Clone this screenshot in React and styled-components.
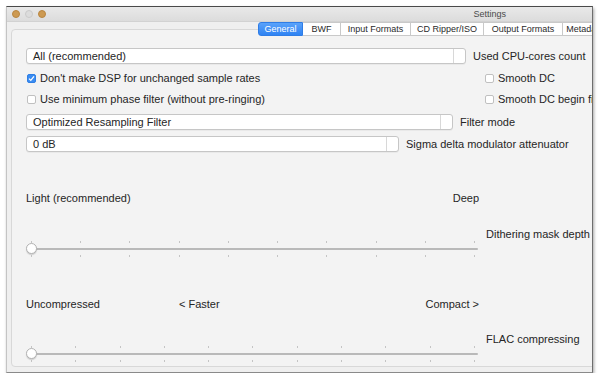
import React from "react";
import styled, { createGlobalStyle } from "styled-components";

const GlobalStyle = createGlobalStyle`
  body {
    margin: 0;
    background: #ffffff;
    font-family: "Liberation Sans", Arial, sans-serif;
  }
`;

const Window = styled.div`
  margin: 6px 0 0 6px;
  width: 587px;
  height: 367px;
  box-sizing: border-box;
  border: 1px solid #c4c4c4;
  border-top-color: #4a4a4a;
  border-right-color: #6e6e6e;
  border-bottom-color: #8a8a8a;
  background: #efefef;
  box-shadow: 1px 2px 3px rgba(0, 0, 0, 0.35);
  overflow: hidden;
  display: flex;
  flex-direction: column;
`;

const TitleBar = styled.div`
  height: 14px;
  flex: none;
  display: flex;
  align-items: center;
  padding-left: 5px;
  background: linear-gradient(#e9e9e9, #dcdcdc);
  border-bottom: 1px solid #d2d2d2;
`;

const Light = styled.span`
  width: 8px;
  height: 8px;
  border-radius: 50%;
  margin-right: 5px;
  box-sizing: border-box;
  background: ${(p) => (p.$off ? "#dcdcdc" : "#cd9a52")};
  border: 1px solid ${(p) => (p.$off ? "#cacaca" : "#b98640")};
`;

const Title = styled.span`
  margin-left: auto;
  margin-right: 86px;
  font-size: 9px;
  color: #4a4a4a;
`;

const TabBar = styled.div`
  position: relative;
  z-index: 1;
  display: flex;
  height: 14px;
  margin-left: 251px;
`;

const Tab = styled.div`
  flex: none;
  width: ${(p) => p.$w}px;
  box-sizing: border-box;
  display: flex;
  align-items: center;
  justify-content: center;
  font-size: 9px;
  white-space: nowrap;
  color: ${(p) => (p.$active ? "#ffffff" : "#2a2a2a")};
  background: ${(p) =>
    p.$active ? "linear-gradient(#5aa2fa, #2f83f3)" : "#ffffff"};
  border: 1px solid ${(p) => (p.$active ? "#2f7de6" : "#c9c9c9")};
  border-left-width: ${(p) => (p.$first ? 1 : 0)}px;
  border-radius: ${(p) => (p.$first ? "3px 0 0 3px" : "0")};
  overflow: hidden;
`;

const Panel = styled.div`
  flex: 1;
  margin: -7px -20px 5px 4px;
  padding: 18px 0 0 14px;
  border: 1px solid #d8d8d8;
  border-radius: 4px;
  background: #f3f3f3;
  display: flex;
  flex-direction: column;
  font-size: 11px;
  color: #252525;
`;

const Row = styled.div`
  display: flex;
  align-items: center;
  height: ${(p) => p.$h || 16}px;
  margin-top: ${(p) => p.$mt || 0}px;
`;

const Combo = styled.div`
  flex: none;
  width: ${(p) => p.$w}px;
  height: 16px;
  box-sizing: border-box;
  display: flex;
  align-items: center;
  background: #ffffff;
  border: 1px solid #c6c6c6;
  border-radius: 3px;
  box-shadow: 0 1px 0 rgba(0, 0, 0, 0.04);
`;

const ComboText = styled.span`
  flex: 1;
  padding-left: 6px;
  white-space: nowrap;
`;

const ComboArrow = styled.span`
  width: 11px;
  align-self: stretch;
  border-left: 1px solid #d8d8d8;
`;

const SideLabel = styled.span`
  margin-left: 7px;
  white-space: nowrap;
`;

const CheckRow = styled.div`
  display: grid;
  grid-template-columns: 459px auto;
  align-items: center;
  height: 14px;
  margin-top: 7px;
  white-space: nowrap;
`;

const Check = styled.label`
  display: flex;
  align-items: center;
  gap: 4px;
  margin-left: ${(p) => p.$ml || 0}px;
`;

const Box = styled.span`
  width: 9px;
  height: 9px;
  box-sizing: border-box;
  border-radius: 2px;
  display: flex;
  align-items: center;
  justify-content: center;
  background: ${(p) => (p.$on ? "#3a8cf2" : "#ffffff")};
  border: 1px solid ${(p) => (p.$on ? "#2f7fe4" : "#c0c0c0")};
`;

const SliderBlock = styled.div`
  display: grid;
  grid-template-columns: 453px auto;
  grid-template-rows: 14px ${(p) => p.$gap}px 16px;
  margin-top: ${(p) => p.$mt}px;
`;

const Marks = styled.div`
  display: grid;
  grid-template-columns: ${(p) => p.$cols};
  align-items: center;
  white-space: nowrap;
`;

const MarkEnd = styled.span`
  justify-self: end;
`;

const SliderLabel = styled.span`
  grid-column: 2;
  grid-row: 2 / span 2;
  align-self: start;
  margin: ${(p) => p.$top}px 0 0 7px;
  white-space: nowrap;
`;

const Track = styled.div`
  grid-column: 1;
  grid-row: 3;
  position: relative;
  display: flex;
  justify-content: space-between;
  padding: 0 4px 0 5px;
  &::before {
    content: "";
    position: absolute;
    left: 5px;
    right: 1px;
    top: 7px;
    height: 2px;
    border-radius: 1px;
    background: #b9b9b9;
  }
`;

const Tick = styled.span`
  width: 1px;
  display: flex;
  flex-direction: column;
  justify-content: space-between;
  &::before,
  &::after {
    content: "";
    height: 2px;
    background: #c4c4c4;
  }
`;

const Thumb = styled.span`
  position: absolute;
  left: 0;
  top: 2px;
  width: 11px;
  height: 11px;
  box-sizing: border-box;
  border-radius: 50%;
  background: #ffffff;
  border: 1px solid #b3b3b3;
  box-shadow: 0 1px 1px rgba(0, 0, 0, 0.15);
`;

const tabs = [
  { label: "General", w: 45, active: true },
  { label: "BWF", w: 38 },
  { label: "Input Formats", w: 70 },
  { label: "CD Ripper/ISO", w: 73 },
  { label: "Output Formats", w: 79 },
  { label: "Metadata", w: 45 },
];

const Slider = ({ ticks }) => (
  <Track>
    {Array.from({ length: ticks }, (_, i) => (
      <Tick key={i} />
    ))}
    <Thumb />
  </Track>
);

const CheckMark = () => (
  <svg width="7" height="7" viewBox="0 0 7 7">
    <path d="M1 3.6 L2.8 5.4 L6 1.4" fill="none" stroke="#fff" strokeWidth="1.3" />
  </svg>
);

export default function App() {
  return (
    <>
      <GlobalStyle />
      <Window>
        <TitleBar>
          <Light />
          <Light $off />
          <Light />
          <Title>Settings</Title>
        </TitleBar>
        <TabBar>
          {tabs.map((t, i) => (
            <Tab key={t.label} $w={t.w} $active={t.active} $first={i === 0}>
              {t.label}
            </Tab>
          ))}
        </TabBar>
        <Panel>
          <Row>
            <Combo $w={440}>
              <ComboText>All (recommended)</ComboText>
              <ComboArrow />
            </Combo>
            <SideLabel>Used CPU-cores count</SideLabel>
          </Row>
          <CheckRow>
            <Check $ml={1}>
              <Box $on>
                <CheckMark />
              </Box>
              Don't make DSP for unchanged sample rates
            </Check>
            <Check>
              <Box />
              Smooth DC
            </Check>
          </CheckRow>
          <CheckRow>
            <Check $ml={1}>
              <Box />
              Use minimum phase filter (without pre-ringing)
            </Check>
            <Check>
              <Box />
              Smooth DC begin fix
            </Check>
          </CheckRow>
          <Row $mt={8}>
            <Combo $w={427}>
              <ComboText>Optimized Resampling Filter</ComboText>
              <ComboArrow />
            </Combo>
            <SideLabel>Filter mode</SideLabel>
          </Row>
          <Row $mt={6}>
            <Combo $w={373}>
              <ComboText>0 dB</ComboText>
              <ComboArrow />
            </Combo>
            <SideLabel>Sigma delta modulator attenuator</SideLabel>
          </Row>
          <SliderBlock $mt={39} $gap={36}>
            <Marks $cols="1fr auto">
              <span>Light (recommended)</span>
              <MarkEnd>Deep</MarkEnd>
            </Marks>
            <SliderLabel $top={23}>Dithering mask depth</SliderLabel>
            <Slider ticks={10} />
          </SliderBlock>
          <SliderBlock $mt={40} $gap={35}>
            <Marks $cols="153px 1fr auto">
              <span>Uncompressed</span>
              <span>&lt; Faster</span>
              <MarkEnd>Compact &gt;</MarkEnd>
            </Marks>
            <SliderLabel $top={22}>FLAC compressing</SliderLabel>
            <Slider ticks={11} />
          </SliderBlock>
        </Panel>
      </Window>
    </>
  );
}
